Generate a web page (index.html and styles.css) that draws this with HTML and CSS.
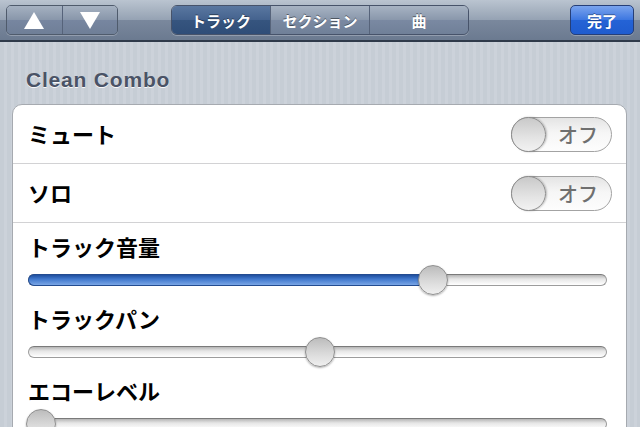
FILE: index.html
```html
<!DOCTYPE html>
<html lang="ja">
<head>
  <meta charset="UTF-8">
  <meta name="viewport" content="width=device-width, initial-scale=1.0">
  <title>Clean Combo</title>
  <link rel="stylesheet" href="styles.css">
</head>
<body>
  <!-- ツールバー -->
  <div class="toolbar">
    <div class="arrows">
      <button class="arrow">
        <svg width="20" height="17" viewBox="0 0 20 17"><polygon points="10,0 20,17 0,17" fill="#fff"/></svg>
      </button>
      <button class="arrow">
        <svg width="20" height="17" viewBox="0 0 20 17"><polygon points="0,0 20,0 10,17" fill="#fff"/></svg>
      </button>
    </div>
    <div class="segments">
      <button class="segment selected">トラック</button>
      <button class="segment">セクション</button>
      <button class="segment">曲</button>
    </div>
    <div class="done-wrap">
      <button class="done">完了</button>
    </div>
  </div>

  <div class="content">
    <h2 class="group-title">Clean Combo</h2>

    <div class="card">
      <div class="row">
        <span class="row-label">ミュート</span>
        <div class="switch"><span class="knob"></span><span class="switch-text">オフ</span></div>
      </div>
      <div class="row">
        <span class="row-label">ソロ</span>
        <div class="switch"><span class="knob"></span><span class="switch-text">オフ</span></div>
      </div>
      <div class="sliders">
        <div class="slider-block">
          <div class="slider-label">トラック音量</div>
          <div class="slider">
            <div class="track"></div>
            <div class="fill" style="width: calc(0.71 * (100% - 30px) + 15px)"></div>
            <div class="thumb" style="left: calc(0.71 * (100% - 30px))"></div>
          </div>
        </div>
        <div class="slider-block">
          <div class="slider-label">トラックパン</div>
          <div class="slider">
            <div class="track"></div>
            <div class="thumb" style="left: calc(0.505 * (100% - 30px))"></div>
          </div>
        </div>
        <div class="slider-block">
          <div class="slider-label">エコーレベル</div>
          <div class="slider">
            <div class="track"></div>
            <div class="thumb" style="left: -2px"></div>
          </div>
        </div>
      </div>
    </div>
  </div>
</body>
</html>
```

FILE: styles.css
```css
html, body {
  margin: 0;
  padding: 0;
}
body {
  width: 640px;
  height: 427px;
  overflow: hidden;
  font-family: "Noto Sans CJK JP", "Liberation Sans", sans-serif;
  background: repeating-linear-gradient(90deg, #c6cdd5 0 4px, #ccd2da 4px 7px);
}
button {
  font-family: "Noto Sans CJK JP", "Liberation Sans", sans-serif;
  cursor: pointer;
  padding: 0;
}

/* ツールバー */
.toolbar {
  display: grid;
  grid-template-columns: 1fr auto 1fr;
  align-items: center;
  height: 40px;
  padding: 0 6px;
  background: linear-gradient(#bac4d0, #95a2b3 50%, #7a889d 51%, #6b7a90);
  border-bottom: 2px solid #2f3a4a;
}
.arrows {
  display: flex;
  width: 112px;
  height: 30px;
  border: 1px solid #4f5b6c;
  border-radius: 5px;
  overflow: hidden;
  box-sizing: border-box;
  box-shadow: 0 1px 0 rgba(255, 255, 255, 0.25);
}
.arrow {
  flex: 1;
  display: flex;
  align-items: center;
  justify-content: center;
  border: none;
  background: linear-gradient(#a5b1c1, #8896aa 50%, #7786a0 51%, #6f7f97);
}
.arrow + .arrow {
  border-left: 1px solid #56637a;
}
.segments {
  display: flex;
  width: 298px;
  height: 30px;
  border: 1px solid #47536a;
  border-radius: 6px;
  overflow: hidden;
  box-sizing: border-box;
  box-shadow: 0 1px 0 rgba(255, 255, 255, 0.25);
}
.segment {
  flex: 1;
  border: none;
  color: #fff;
  font-size: 15px;
  font-weight: 700;
  text-shadow: 0 -1px 0 rgba(0, 0, 0, 0.45);
  background: linear-gradient(#a7b3c3, #8997ab 50%, #7a89a2 51%, #708098);
}
.segment + .segment {
  border-left: 1px solid #56637a;
}
.segment.selected {
  background: linear-gradient(#5a77a0, #44628e 50%, #36557f 51%, #2f4d78);
}
.done-wrap {
  display: flex;
  justify-content: flex-end;
}
.done {
  width: 64px;
  height: 30px;
  border: 1px solid #263f78;
  border-radius: 5px;
  color: #fff;
  font-size: 15px;
  font-weight: 700;
  text-shadow: 0 -1px 0 rgba(0, 0, 0, 0.35);
  background: linear-gradient(#7aa4ee, #3c76e0 50%, #2463d6 51%, #1f5ccf);
  box-shadow: 0 1px 0 rgba(255, 255, 255, 0.25);
}

/* 本体 */
.content {
  padding: 25px 13px 0 12px;
}
.group-title {
  margin: 0 0 11px 14px;
  font-family: "Liberation Sans", Arial, sans-serif;
  font-size: 21px;
  font-weight: 700;
  letter-spacing: 0.8px;
  line-height: 26px;
  color: #4a5366;
  text-shadow: 0 1px 0 rgba(255, 255, 255, 0.85);
}
.card {
  background: #fff;
  border: 1px solid #a6aab0;
  border-radius: 10px;
  overflow: hidden;
}
.row {
  display: flex;
  align-items: center;
  justify-content: space-between;
  height: 58px;
  padding: 0 14px 0 15px;
  border-bottom: 1px solid #d2d2d4;
}
.row-label {
  font-size: 22px;
  font-weight: 700;
  line-height: 26px;
  margin-top: -3px;
  color: #000;
}
.switch {
  position: relative;
  display: flex;
  align-items: center;
  justify-content: flex-end;
  width: 101px;
  height: 35px;
  box-sizing: border-box;
  padding-right: 13px;
  border: 1px solid #a3a3a3;
  border-radius: 18px;
  background: linear-gradient(#e4e4e4, #f6f6f6 45%, #fdfdfd);
}
.knob {
  position: absolute;
  left: -1px;
  top: -1px;
  width: 35px;
  height: 35px;
  box-sizing: border-box;
  border: 1px solid #8d8d8d;
  border-radius: 50%;
  background: linear-gradient(#c9c9c9, #e4e4e4 60%, #f2f2f2);
  box-shadow: 1px 0 2px rgba(0, 0, 0, 0.25);
}
.switch-text {
  font-size: 20px;
  font-weight: 500;
  color: #6f6f6f;
}
.sliders {
  padding: 10px 19px 0 15px;
}
.slider-block {
  margin-bottom: 10px;
}
.slider-label {
  font-size: 22px;
  font-weight: 700;
  line-height: 26px;
  color: #000;
  margin-bottom: 6px;
}
.slider {
  position: relative;
  height: 30px;
}
.track {
  position: absolute;
  left: 0;
  right: 0;
  top: 9px;
  height: 12px;
  box-sizing: border-box;
  border: 1px solid #9c9c9c;
  border-top-color: #7a7a7a;
  border-radius: 6px;
  background: linear-gradient(#b5b5b5, #e6e6e6 40%, #ffffff);
}
.fill {
  position: absolute;
  left: 0;
  top: 9px;
  height: 12px;
  box-sizing: border-box;
  border: 1px solid #234c91;
  border-right: none;
  border-radius: 6px 0 0 6px;
  background: linear-gradient(#1f4f9e, #3f77cc 40%, #7aa6e6);
}
.thumb {
  position: absolute;
  top: 0;
  width: 30px;
  height: 30px;
  box-sizing: border-box;
  border: 1px solid #8f8f8f;
  border-radius: 50%;
  background: linear-gradient(#bcbcbc, #dadada 55%, #efefef);
  box-shadow: 0 1px 2px rgba(0, 0, 0, 0.3);
}
```
